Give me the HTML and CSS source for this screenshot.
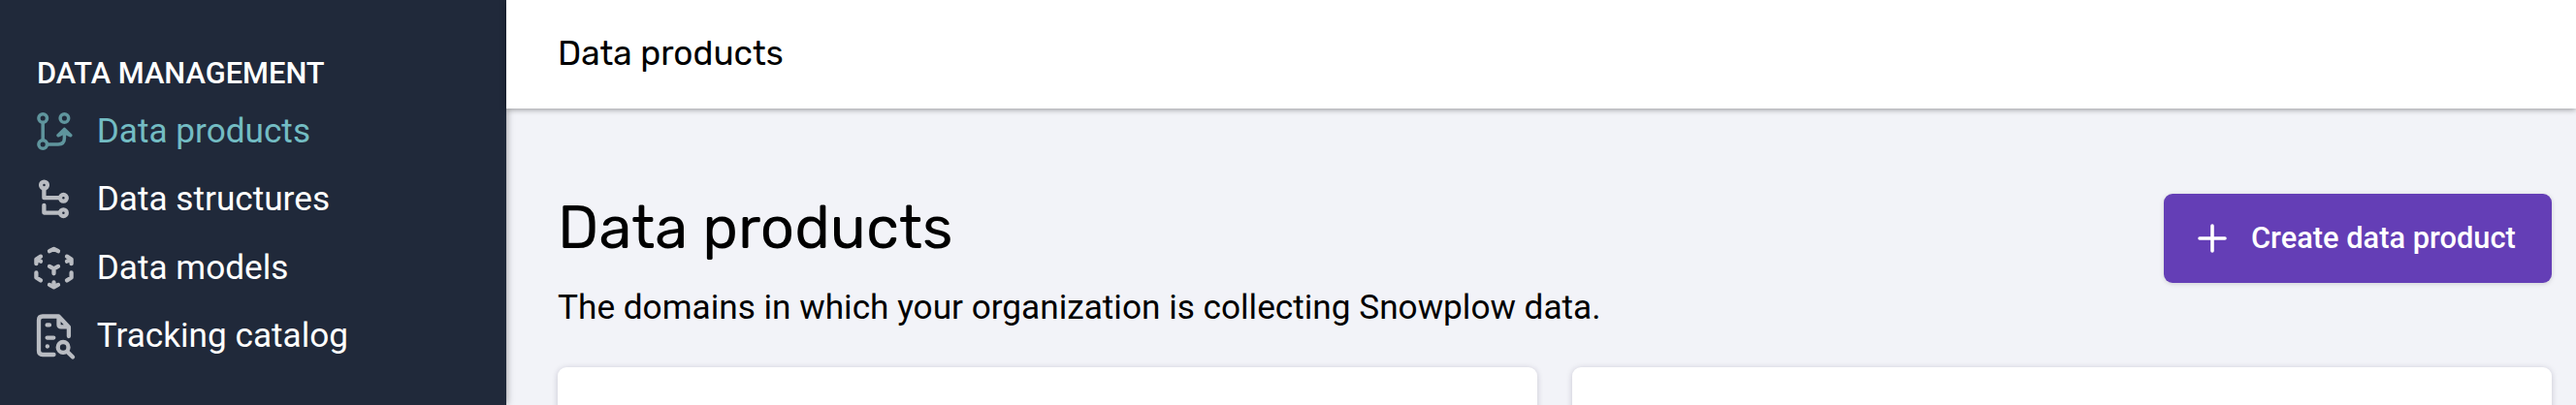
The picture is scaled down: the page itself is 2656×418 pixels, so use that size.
FILE: index.html
```html
<!DOCTYPE html>
<html lang="en">
<head>
<meta charset="utf-8">
<title>Data products</title>
<link rel="stylesheet" href="styles.css">
</head>
<body>
<div class="app">
  <aside class="sidebar">
    <h2 class="section-title">DATA MANAGEMENT</h2>
    <nav class="nav">
      <a class="nav-item active">
        <svg class="nav-icon" viewBox="0 0 70 70" stroke-width="3.5">
          <circle cx="24.2" cy="22" r="4.3"/><circle cx="46.4" cy="22" r="4.3"/><circle cx="24.2" cy="49" r="4.3"/>
          <path d="M24.2 26.5V44.5M29 48.9H40Q46.4 48.9 46.4 42.5V35"/>
          <path class="solid" stroke-width="2" d="M46.4 32.5L53.6 39.5Q53.6 40.8 52 40.3L46.4 37.5L40.8 40.3Q39.2 40.8 39.2 39.5Z"/>
        </svg>
        <span>Data products</span>
      </a>
      <a class="nav-item">
        <svg class="nav-icon" viewBox="0 0 70 70" stroke-width="4.3">
          <circle cx="25.5" cy="21" r="3.4"/><circle cx="45.4" cy="34.3" r="3.4"/><circle cx="45.4" cy="49.7" r="3.4"/>
          <path d="M25.4 25V34.2H41M25.4 41.8V49.6H41"/>
        </svg>
        <span>Data structures</span>
      </a>
      <a class="nav-item">
        <svg class="nav-icon" viewBox="0 0.5 70 70" stroke-width="4.3">
          <path d="M31 18.7L35.5 16.3L40 18.7M17.4 31.7V27L22 24.2M18 27L22 29.2M53.6 31.7V27L49 24.2M53 27L49 29.2M17.4 41V46L22 48.9M53.6 41V46L49 48.9M31 34.4L35.5 36.9L40 34.4M35.5 37V41.8M31 53.4L35.5 55.9L40 53.4M35.5 51V55.5"/>
        </svg>
        <span>Data models</span>
      </a>
      <a class="nav-item">
        <svg class="nav-icon" viewBox="0 0.9 70 70" stroke-width="4.3">
          <path d="M35.5 55.9H24Q20 55.9 20 52V20.3Q20 16.4 24 16.4H40.5L50.9 27.3V37M40.5 17.5V25Q40.5 27.3 43 27.3H50M28.6 25.3H31M28.6 38.5H35.3M28.8 47.4H28.9"/>
          <circle cx="45.1" cy="48.3" r="5.4"/><path d="M49.5 53L55 58.4"/>
        </svg>
        <span>Tracking catalog</span>
      </a>
    </nav>
  </aside>
  <div class="main">
    <header class="topbar">Data products</header>
    <main class="content">
      <div class="page-head">
        <div class="intro">
          <h1 class="title">Data products</h1>
          <p class="subtitle">The domains in which your organization is collecting Snowplow data.</p>
        </div>
        <button class="create">
          <svg class="plus" viewBox="0 0 30 30"><path d="M15 2V28M2 15H28"/></svg>
          <span>Create data product</span>
        </button>
      </div>
      <div class="cards"><section class="card"></section><section class="card"></section></div>
    </main>
  </div>
</div>
</body>
</html>
```
FILE: styles.css
```css
* { box-sizing: border-box; }
body { margin: 0; font-family: Roboto, sans-serif; color: #000; }
h1, h2, p { margin: 0; }
.app { display: flex; height: 418px; overflow: hidden; background: #f2f3f8; }
.sidebar { width: 522px; flex: none; background: #20293a; color: #fff; box-shadow: 0 0 8px rgba(0,0,0,.4); }
.section-title { height: 99.7px; padding: 56px 0 0 38px; font-size: 30.8px; line-height: 40px; font-weight: 500; }
.nav-item { display: flex; align-items: center; height: 70.4px; padding-left: 20px; gap: 9.7px; font-size: 35.2px; line-height: 40px; }
.nav-icon { width: 70px; height: 70px; flex: none; fill: none; stroke: #b9bcc2; stroke-linecap: round; stroke-linejoin: round; }
.active { color: #73bcc3; }
.active .nav-icon { stroke: #5f959d; }
.active .solid { fill: #5f959d; }
.main { flex: 1; min-width: 0; display: flex; flex-direction: column; }
.topbar { position: relative; height: 112px; flex: none; padding: 35px 0 0 53px; background: #fff; font-family: Rubik, Roboto, sans-serif; font-size: 35.2px; line-height: 40px; box-shadow: 0 1px 6px rgba(0,0,0,.4); }
.content { flex: 1; padding: 88px 25px 0 53px; }
.page-head { display: flex; justify-content: space-between; align-items: flex-start; height: 179px; }
.title { font-family: Rubik, Roboto, sans-serif; font-size: 61.6px; line-height: 70px; font-weight: 400; }
.subtitle { padding-top: 27px; font-size: 35.2px; line-height: 40px; }
.create { display: flex; align-items: center; width: 400px; height: 92px; padding: 0 0 0 35px; gap: 25px; border: 0; border-radius: 9px; background: #643eb6; color: #fff; font: 500 30.8px/40px Roboto, sans-serif; white-space: nowrap; box-shadow: 0 1px 5px rgba(0,0,0,.15); }
.plus { width: 30px; height: 30px; fill: none; stroke: #fff; stroke-width: 3.6; stroke-linecap: round; }
.cards { display: grid; grid-template-columns: 1fr 1fr; gap: 36px; }
.card { height: 120px; border-radius: 9px; background: #fff; box-shadow: 0 1px 6px rgba(30,20,60,.2); }
```
